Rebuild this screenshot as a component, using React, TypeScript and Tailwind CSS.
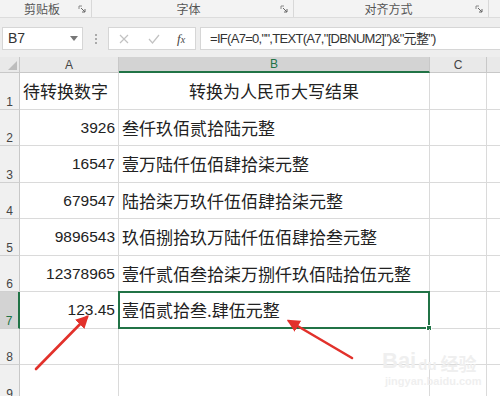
const rows = [
  { a: "待转换数字", b: "转换为人民币大写结果", head: true },
  { a: "3926", b: "叁仟玖佰贰拾陆元整" },
  { a: "16547", b: "壹万陆仟伍佰肆拾柒元整" },
  { a: "679547", b: "陆拾柒万玖仟伍佰肆拾柒元整" },
  { a: "9896543", b: "玖佰捌拾玖万陆仟伍佰肆拾叁元整" },
  { a: "12378965", b: "壹仟贰佰叁拾柒万捌仟玖佰陆拾伍元整" },
  { a: "123.45", b: "壹佰贰拾叁.肆伍元整", selected: true },
  { a: "", b: "" },
  { a: "", b: "" },
];

const cjk = "font-['Noto_Sans_CJK_SC',sans-serif]";
const ui = "font-['Liberation_Sans','Noto_Sans_CJK_SC',sans-serif]";

const Launcher = () => (
  <svg width="8" height="8" viewBox="0 0 8 8" className="shrink-0">
    <path d="M1 1h3M1 1v3" stroke="#888" strokeWidth="1" fill="none" />
    <path d="M3 3l4 4M7 4v3H4" stroke="#666" strokeWidth="1" fill="none" />
  </svg>
);

const Ribbon = () => (
  <div className={`flex h-[18px] bg-[#f3f3f3] border-b border-[#dcdcdc] text-[12px] text-[#555] ${cjk}`}>
    <div className="w-[92px] flex items-center border-r border-[#d8d8d8] pl-[24px] pr-[5px]">
      <span className="flex-1 leading-none">剪贴板</span>
      <Launcher />
    </div>
    <div className="w-[202px] flex items-center border-r border-[#d8d8d8] pr-[5px]">
      <span className="flex-1 text-center leading-none pl-[5px]">字体</span>
      <Launcher />
    </div>
    <div className="w-[195px] flex items-center border-r border-[#d8d8d8] pr-[5px]">
      <span className="flex-1 text-center leading-none pl-[8px]">对齐方式</span>
      <Launcher />
    </div>
    <div className="flex-1" />
  </div>
);

const FormulaBar = () => (
  <div className="h-[39px] bg-[#eeeeee] flex items-center pt-[2px]">
    <div className={`ml-[2px] w-[81px] h-[23px] bg-white border border-[#d6d6d6] flex items-center pl-[5px] pr-[4px] text-[14px] text-[#333] ${ui}`}>
      <span className="flex-1">B7</span>
      <svg width="8" height="5" viewBox="0 0 8 5">
        <path d="M0 0h8L4 5z" fill="#777" />
      </svg>
    </div>
    <div className="w-[25px] flex flex-col items-center gap-[2px]">
      <div className="w-[2px] h-[2px] bg-[#aaa]" />
      <div className="w-[2px] h-[2px] bg-[#aaa]" />
      <div className="w-[2px] h-[2px] bg-[#aaa]" />
    </div>
    <div className="w-[88px] h-[23px] bg-white border border-[#d6d6d6] flex items-center pl-[10px]">
      <svg width="10" height="10" viewBox="0 0 10 10" className="mr-[19px]">
        <path d="M1 1l8 8M9 1l-8 8" stroke="#c2c2c2" strokeWidth="1.2" />
      </svg>
      <svg width="12" height="10" viewBox="0 0 12 10" className="mr-[17px]">
        <path d="M1 5l3.5 4L11 1" stroke="#c2c2c2" strokeWidth="1.2" fill="none" />
      </svg>
      <span className="font-['Liberation_Serif',serif] italic text-[13px] text-[#444] leading-none">
        f<span className="text-[10px]">x</span>
      </span>
    </div>
    <div className={`ml-[4px] flex-1 h-[23px] bg-white border border-[#d6d6d6] border-r-0 flex items-center pl-[9px] text-[13px] tracking-[-0.7px] text-[#333] ${ui}`}>
      =IF(A7=0,"",TEXT(A7,"[DBNUM2]")&"元整")
    </div>
  </div>
);

const HeaderRow = () => (
  <div className={`flex h-[16px] text-[12px] leading-none ${ui}`}>
    <div className="w-[20px] bg-[#e9e9e9] border-r border-b border-[#c8c8c8] flex items-end justify-end p-[2px]">
      <svg width="9" height="9" viewBox="0 0 9 9">
        <path d="M9 0v9H0z" fill="#bdbdbd" />
      </svg>
    </div>
    <div className="w-[99px] bg-[#e9e9e9] border-r border-b border-[#c8c8c8] flex items-center justify-center text-[#444]">
      A
    </div>
    <div className="w-[311px] bg-[#d3d3d3] border-r border-b-2 border-r-[#c8c8c8] border-b-[#217346] flex items-center justify-center text-[#217346]">
      B
    </div>
    <div className="w-[57px] bg-[#e9e9e9] border-r border-b border-[#c8c8c8] flex items-center justify-center text-[#444]">
      C
    </div>
    <div className="flex-1 bg-[#e9e9e9] border-b border-[#c8c8c8]" />
  </div>
);

const Row = ({ i, r }: { i: number; r: (typeof rows)[number] }) => (
  <div className="flex h-[36.5px]">
    <div
      className={`w-[20px] border-b border-[#d0d0d0] flex items-end justify-center pb-[1px] text-[12px] leading-none ${ui} ${
        r.selected
          ? "bg-[#d3d3d3] border-r-2 border-r-[#217346] text-[#217346]"
          : "bg-[#f0f0f0] border-r border-r-[#c8c8c8] text-[#444]"
      }`}
    >
      {i + 1}
    </div>
    <div
      className={`w-[99px] border-r border-b border-[#dadada] flex items-center px-[3px] text-[#222] ${
        r.head ? `${cjk} text-[17px] justify-start` : `${ui} text-[15.5px] justify-end`
      }`}
    >
      {r.a}
    </div>
    <div
      className={`relative w-[311px] border-r border-b border-[#dadada] flex items-center px-[3px] text-[17px] text-[#222] ${cjk} ${
        r.head ? "justify-center" : "justify-start"
      }`}
    >
      {r.b}
      {r.selected && (
        <div className="absolute -left-[1px] -top-[1px] -right-[1px] -bottom-[1px] border-2 border-[#217346]">
          <div className="absolute -right-[4px] -bottom-[4px] w-[6px] h-[6px] bg-[#217346] border border-white" />
        </div>
      )}
    </div>
    <div className="w-[57px] border-r border-b border-[#dadada]" />
    <div className="flex-1 border-b border-[#dadada]" />
  </div>
);

const Arrows = () => (
  <svg className="absolute inset-0 pointer-events-none" width="500" height="396" viewBox="0 0 500 396">
    <defs>
      <marker id="head" viewBox="0 0 10 10" refX="8" refY="5" markerWidth="5" markerHeight="5" orient="auto">
        <path d="M0 0L10 5L0 10z" fill="#e2312b" />
      </marker>
    </defs>
    <line x1="36" y1="369" x2="87" y2="317" stroke="#e2312b" strokeWidth="2.6" strokeLinecap="round" markerEnd="url(#head)" />
    <line x1="352" y1="358" x2="289" y2="321" stroke="#e2312b" strokeWidth="2.6" strokeLinecap="round" markerEnd="url(#head)" />
  </svg>
);

const Watermark = () => (
  <div className="absolute left-[382px] top-[350px] pointer-events-none flex flex-col items-start text-[#efefef]">
    <div className="flex items-end font-['Liberation_Sans',sans-serif] font-bold leading-none">
      <span className="text-[22px]">Bai</span>
      <span className="text-[15px] ml-[2px] mr-[4px]">du</span>
      <span className={`text-[18px] ${cjk}`}>经验</span>
    </div>
    <span className="text-[11px] font-['Liberation_Sans',sans-serif] font-bold leading-none mt-[4px] ml-[3px]">
      jingyan.baidu.com
    </span>
  </div>
);

export default function App() {
  return (
    <div className="relative w-[500px] h-[396px] overflow-hidden bg-white">
      <Ribbon />
      <FormulaBar />
      <HeaderRow />
      {rows.map((r, i) => (
        <Row key={i} i={i} r={r} />
      ))}
      <Watermark />
      <Arrows />
    </div>
  );
}
